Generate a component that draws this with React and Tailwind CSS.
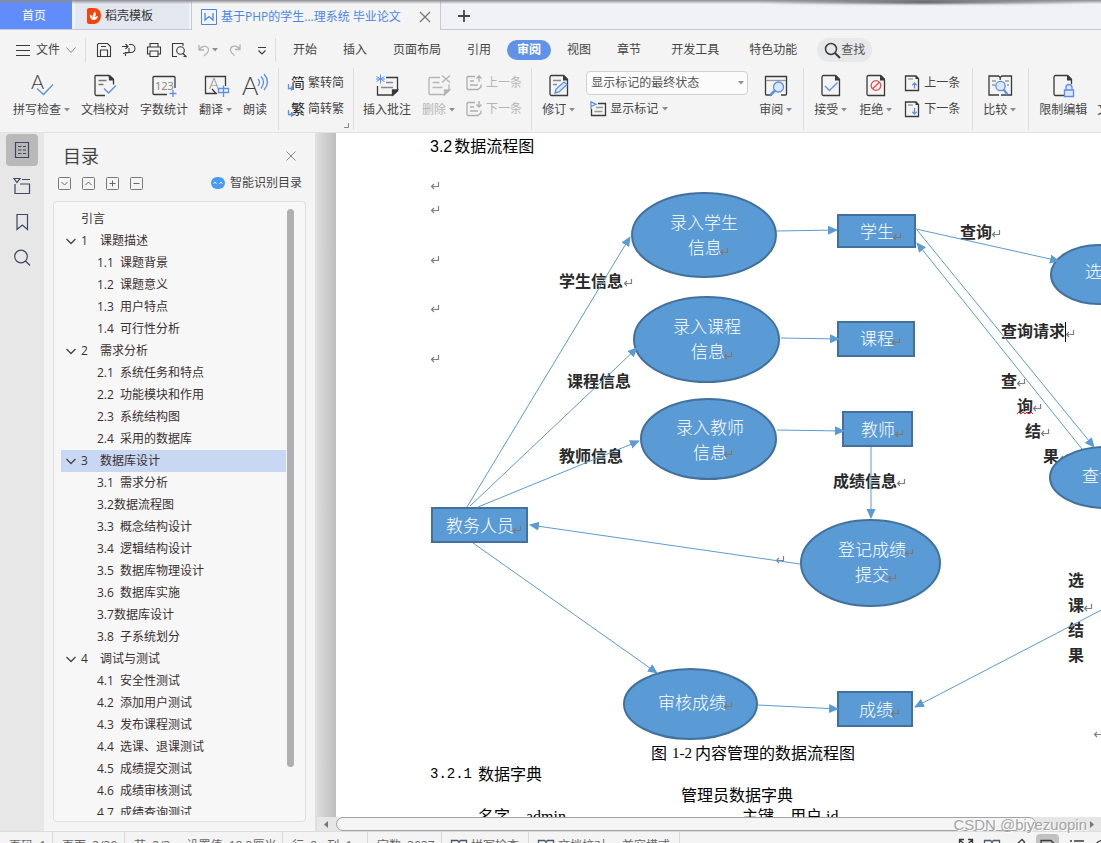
import React from 'react';

const OUTLINE = [
  { title: '引言' },
  { num: '1', title: '课题描述', parent: true },
  { num: '1.1  ', title: '课题背景' },
  { num: '1.2  ', title: '课题意义' },
  { num: '1.3  ', title: '用户特点' },
  { num: '1.4  ', title: '可行性分析' },
  { num: '2', title: '需求分析', parent: true },
  { num: '2.1  ', title: '系统任务和特点' },
  { num: '2.2  ', title: '功能模块和作用' },
  { num: '2.3  ', title: '系统结构图' },
  { num: '2.4  ', title: '采用的数据库' },
  { num: '3', title: '数据库设计', parent: true, selected: true },
  { num: '3.1  ', title: '需求分析' },
  { num: '3.2', title: '数据流程图' },
  { num: '3.3  ', title: '概念结构设计' },
  { num: '3.4  ', title: '逻辑结构设计' },
  { num: '3.5  ', title: '数据库物理设计' },
  { num: '3.6  ', title: '数据库实施' },
  { num: '3.7', title: '数据库设计' },
  { num: '3.8  ', title: '子系统划分' },
  { num: '4', title: '调试与测试', parent: true },
  { num: '4.1  ', title: '安全性测试' },
  { num: '4.2  ', title: '添加用户测试' },
  { num: '4.3  ', title: '发布课程测试' },
  { num: '4.4  ', title: '选课、退课测试' },
  { num: '4.5  ', title: '成绩提交测试' },
  { num: '4.6  ', title: '成绩审核测试' },
  { num: '4.7  ', title: '成绩查询测试' },
];

// ---------- small shared pieces ----------

const Icon = ({ size = 24, w, children, className = '' }) => (
  <svg
    width={w || size}
    height={size}
    viewBox={`0 0 ${w || size} ${size}`}
    fill="none"
    stroke="#3a3a3a"
    strokeWidth="1.3"
    className={`shrink-0 overflow-visible ${className}`}
    aria-hidden="true"
  >
    {children}
  </svg>
);

const Caret = () => (
  <svg width="6" height="4" viewBox="0 0 6 4" className="shrink-0" aria-hidden="true">
    <path d="M0 0h6L3 3.6z" fill="#8f8f8f" />
  </svg>
);

const BigButton = ({ icon, label, caret, disabled }) => (
  <button
    type="button"
    disabled={disabled}
    className={`flex shrink-0 flex-col items-center gap-[5px] whitespace-nowrap ${disabled ? 'text-[#b5b5b5]' : ''}`}
  >
    {icon}
    <span className="flex items-center gap-[3px] leading-4">
      {label}
      {caret && <Caret />}
    </span>
  </button>
);

const SmallButton = ({ icon, label, caret, disabled }) => (
  <button
    type="button"
    disabled={disabled}
    className={`flex shrink-0 items-center gap-1 whitespace-nowrap leading-4 ${disabled ? 'text-[#b5b5b5]' : ''}`}
  >
    {icon}
    {label}
    {caret && <Caret />}
  </button>
);

const Group = ({ children, className = '' }) => (
  <div className={`flex shrink-0 items-start border-r border-[#dedede] pt-[5px] ${className}`}>{children}</div>
);

// ---------- ribbon icons ----------

const BLUE = '#5b8fe8';

const PageOutline = ({ color = '#3a3a3a' }) => (
  <>
    <path d="M4.500 2.500h12l4 4v16h-16a1.500 1.500 0 0 1-1.500-1.500V4a1.500 1.500 0 0 1 1.500-1.500z" stroke={color} />
    <path d="M16 2.500h1.500L21 6v1.500h-5z" fill={color} stroke="none" />
  </>
);

const SpellIcon = () => (
  <Icon>
    <text x="1" y="16" fontSize="20" fill="#3a3a3a" stroke="none" fontFamily="Lato" fontWeight="300">A</text>
    <path d="M7 15.500l6.500 6L23 11.500" stroke={BLUE} />
  </Icon>
);

const ProofIcon = () => (
  <Icon>
    <path d="M12 22.500H3.500A1.500 1.500 0 0 1 2 21V3.500a1 1 0 0 1 1-1h13l4.500 4v5" />
    <path d="M15.500 2.500h2L21 6v1.500h-5z" fill="#3a3a3a" stroke="none" />
    <path d="M5.500 7.500h8M5.500 11.500h5" stroke="#777" />
    <path d="M11 15.500l4.500 4.500L23 12.500" stroke={BLUE} />
  </Icon>
);

const CountIcon = () => (
  <Icon>
    <path d="M15 21.500H2a1 1 0 0 1-1-1v-16a1 1 0 0 1 1-1h20a1 1 0 0 1 1 1V15" />
    <text x="3" y="16.500" fontSize="11" fill="#888" stroke="none" fontFamily="Noto Sans">123</text>
    <path d="M21 17v7M17.500 20.500h7" stroke={BLUE} />
  </Icon>
);

const TranslateIcon = () => (
  <Icon>
    <path d="M13 20.500H1.500v-17h20V13M8 16l4 4.500" />
    <text x="5" y="16" fontSize="15" fill="#888" stroke="none" fontFamily="Lato" fontWeight="300">A</text>
    <path d="M14.500 15.500h10v4h-10zM19.500 12.500V24" stroke={BLUE} />
  </Icon>
);

const ReadIcon = () => (
  <Icon>
    <text x="-1" y="22" fontSize="25" fill="#3a3a3a" stroke="none" fontFamily="Lato" fontWeight="300">A</text>
    <path d="M15 6q3 3 0 7M18 3.500q5 5.500 0 12M21 1q7 8 0 16" stroke={BLUE} />
  </Icon>
);

const ConvertIcon = ({ char }) => (
  <Icon size={18} w={16}>
    <text x="3" y="14" fontSize="14" fill="#222" stroke="none" fontFamily="Noto Sans CJK SC">{char}</text>
    <path d="M.500 10v4.500h4M3 12.500l2 2-2 2" stroke={BLUE} />
  </Icon>
);

const CommentIcon = () => (
  <Icon>
    <path d="M11 4.500h11.500V18l-4.500 4H2.500v-9" />
    <path d="M22.500 17l-5 5v-5z" fill="#3a3a3a" />
    <path d="M11 9.500h7M6 14.500h12" stroke="#888" />
    <path d="M5.500 1.500v9M1.500 3.500l8 5M9.500 3.500l-8 5M1 6h9" stroke={BLUE} strokeWidth="1" />
  </Icon>
);

const DeleteIcon = () => (
  <Icon>
    <g stroke="#b5b5b5">
      <path d="M13 4.500H3a1 1 0 0 0-1 1v15a1 1 0 0 0 1 1h14l5-4v-6" />
      <path d="M22.500 17l-5 5v-5z" fill="#b5b5b5" />
      <path d="M5.500 9.500h7M5.500 14.500h10M15 2.500l8 7M23 2.500l-8 7" />
    </g>
  </Icon>
);

const NoteIcon = ({ up }) => (
  <Icon size={16}>
    <g stroke="#aeaeae">
      <path d="M9 1.500H2a1 1 0 0 0-1 1v11a1 1 0 0 0 1 1h10l3-2.500V9.500M4 6h4M4 10h8" />
      <path d={up ? 'M13 7V1M10.500 3.500L13 1l2.500 2.500' : 'M13 0v6M10.500 3.500L13 6l2.500-2.500'} />
    </g>
  </Icon>
);

const ReviseIcon = () => (
  <Icon>
    <PageOutline />
    <path d="M6 7.500h8M6 11.500h4" stroke="#888" />
    <path d="M8 20l1-4 8-7 3 2.500-8 7.500z" stroke={BLUE} fill="#dbe7fb" />
  </Icon>
);

const MarkupIcon = () => (
  <Icon size={16}>
    <path d="M8 2.500h7.500v12h-14V8" />
    <path d="M6 6.500h7M4.500 10.500h8" stroke="#999" />
    <path d="M1 8V.700l5 2.600-5 2.200" stroke={BLUE} />
  </Icon>
);

const InspectIcon = () => (
  <Icon>
    <path d="M8 22H2.500a1 1 0 0 1-1-1V3.500h21V21a1 1 0 0 1-1 1H17" />
    <path d="M2 7.500h20" stroke="#999" />
    <circle cx="14.500" cy="14" r="5" stroke={BLUE} fill="#dbe7fb" />
    <path d="M11 17.500l-5 5" stroke={BLUE} strokeWidth="2.500" />
  </Icon>
);

const AcceptIcon = () => (
  <Icon>
    <PageOutline />
    <path d="M6 13l4.500 4.500L18.500 9.500" stroke={BLUE} />
  </Icon>
);

const RejectIcon = () => (
  <Icon>
    <PageOutline />
    <circle cx="12" cy="12.500" r="4.800" stroke="#d9534f" />
    <path d="M8.700 15.800l6.600-6.600" stroke="#d9534f" />
  </Icon>
);

const ChangeIcon = ({ up }) => (
  <Icon size={16}>
    <path d="M1.500 1h10.500l2.500 2.500V15.500h-13z" />
    <path d="M11.500.500l3.500 3.500h-3.500z" fill="#3a3a3a" stroke="none" />
    <path d="M4 4h5" stroke="#999" />
    <path d={up ? 'M10.500 13.500V8M8.300 10.200L10.500 8l2.200 2.200' : 'M10.500 7v6M8.300 10.800l2.200 2.200 2.200-2.200'} stroke={BLUE} />
  </Icon>
);

const CompareIcon = () => (
  <Icon>
    <path d="M11 22H1V3h9.500l1.700 1.500L14 3h9.500v19H13M12.200 4v3" />
    <path d="M4 8h4M4 12h3M17 8h4M19 12h2" stroke="#999" />
    <circle cx="12.500" cy="13" r="4.700" stroke={BLUE} fill="#dbe7fb" />
    <path d="M15.500 16.500l4 5" stroke={BLUE} strokeWidth="2.200" />
  </Icon>
);

const RestrictIcon = () => (
  <Icon>
    <path d="M13 22.500H4.500A1.500 1.500 0 0 1 3 21V4a1.500 1.500 0 0 1 1.500-1.500h12l4 4V11" />
    <path d="M16 2.500h1.500L21 6v1.500h-5z" fill="#3a3a3a" stroke="none" />
    <path d="M13.500 17h9v6.500h-9zM15 17v-2.500a3 3 0 0 1 6 0V17" stroke={BLUE} fill="#dbe7fb" />
  </Icon>
);

// ---------- top bars ----------

const TitleTabs = () => (
  <header className="relative flex h-[30px] shrink-0 items-stretch border-b border-[#c3c8da] bg-[#f1f2f8]">
    <div className="absolute inset-x-0 top-0 h-1 bg-linear-to-b from-[#8b8b91] to-transparent" />
    <div className="absolute right-3 top-0 h-1 w-[330px] bg-linear-to-r from-transparent via-[#66666b] to-transparent blur-[1px]" />
    <button type="button" className="w-[72px] bg-[#618dfb] pt-[3px] pr-1 text-white">首页</button>
    <button type="button" className="ml-[3px] flex w-[114px] items-center gap-1 bg-[#e3e7ef] pl-3 pt-[3px] text-[#333]">
      <svg width="14" height="16" viewBox="0 0 14 16" aria-hidden="true">
        <path d="M2 0h5c4 0 7 3 7 7.500S11 16 7 16H2a2 2 0 0 1-2-2V2a2 2 0 0 1 2-2z" fill="#f9420b" />
        <path d="M5.500 12C3.500 10.500 2.500 8.500 3 6.500c1.500.500 2.500 2 2.700 3.500C5.500 7 6.500 4.500 8 3.500c1.300 2 .800 5-.500 7 .800-1.500 2-2.500 3.500-2.500-.300 2.500-2.500 4.500-5.500 4z" fill="#fff" />
      </svg>
      稻壳模板
    </button>
    <div className="-mb-px ml-0.5 flex w-[250px] items-center border-x border-[#c3c8da] bg-[#f4f4f5] px-[9px] pt-[3px] text-[#4a86e8]">
      <svg width="16" height="16" viewBox="0 0 16 16" fill="none" stroke="#4a86e8" className="shrink-0" aria-hidden="true">
        <path d="M.500.500h15v15H.500z" />
        <path d="M4 4v7l4-3.500 4 3.500V4" strokeWidth="1.300" />
      </svg>
      <span className="ml-1 flex-1 whitespace-nowrap">基于PHP的学生...理系统 毕业论文</span>
      <button type="button" aria-label="关闭标签">
        <Icon size={12}><path d="M1 1l10 10M11 1L1 11" stroke="#777" /></Icon>
      </button>
    </div>
    <button type="button" aria-label="新建标签" className="px-4 pt-[3px]">
      <Icon size={14}><path d="M7 1v12M1 7h12" stroke="#444" strokeWidth="1.800" /></Icon>
    </button>
  </header>
);

const MenuTab = ({ children, active }) => (
  <button
    type="button"
    className={`h-5 shrink-0 whitespace-nowrap rounded-full px-2.5 ${active ? 'bg-[#5f92e8] font-bold text-white' : ''}`}
  >
    {children}
  </button>
);

const ToolButton = ({ label, children }) => (
  <button type="button" aria-label={label} className="shrink-0">
    <Icon size={16}>{children}</Icon>
  </button>
);

const MenuBar = () => (
  <nav className="flex h-[38px] shrink-0 items-center pt-0.5">
    <button type="button" className="flex items-center gap-[6px] pl-4 pr-[9px]">
      <Icon size={14}><path d="M0 2.500h14M0 7.500h14M0 12.500h14" strokeWidth="1" /></Icon>
      文件
      <Icon size={10}><path d="M.500 2.500L5 7.500l4.500-5" stroke="#888" strokeWidth="1" /></Icon>
    </button>
    <div className="flex h-6 w-[191px] items-center gap-[9px] border-x border-[#dcdcdc] pl-[10px]">
      <ToolButton label="保存">
        <path d="M2.500 1.500h9l3 3v10H1.500v-12zM4.500 14.500V8h7v6.500M5 4.500h5" strokeWidth="1.100" />
      </ToolButton>
      <ToolButton label="输出为PDF">
        <path d="M1 4.500h5M4.500 2L7 4.500 4.500 7M4.500 14v-3.500H10a4 4 0 0 0 0-8H8M8 6v4.500l-6 1" strokeWidth="1.100" />
      </ToolButton>
      <ToolButton label="打印">
        <path d="M4 5V1.500h8V5M4 12H1.500V5h13v7H12M4 9h8v5.500H4z" strokeWidth="1.100" />
      </ToolButton>
      <ToolButton label="打印预览">
        <path d="M6 14.500H1.500v-13H12V4M14.500 14.500h-2" strokeWidth="1.100" />
        <circle cx="9.500" cy="8.500" r="3.800" strokeWidth="1.100" />
        <path d="M12 11.500l3.500 3.500" />
      </ToolButton>
      <div className="flex items-center">
        <ToolButton label="撤销">
          <path d="M3 3v5h5M3.500 7.500C6 3 13 3.500 12.500 8.500c-.300 2-2 3.500-4.500 5.500" stroke="#b3b3b3" />
        </ToolButton>
        <Caret />
      </div>
      <ToolButton label="恢复">
        <path d="M13 2.500v5H8M12.500 7C10 2.500 3 3.500 3.500 8.500c.300 2 2 3.500 4 5" stroke="#b3b3b3" />
      </ToolButton>
      <ToolButton label="自定义快速访问工具栏">
        <path d="M6 5.500h8M6.500 8.500l3.500 3.500 3.500-3.500" strokeWidth="1.100" />
      </ToolButton>
    </div>
    <div className="flex items-center gap-[10px] pl-[7px]">
      <div className="flex items-center gap-1.5">
        <MenuTab>开始</MenuTab>
        <MenuTab>插入</MenuTab>
        <MenuTab>页面布局</MenuTab>
        <MenuTab>引用</MenuTab>
        <MenuTab active>审阅</MenuTab>
        <MenuTab>视图</MenuTab>
        <MenuTab>章节</MenuTab>
      </div>
      <MenuTab>开发工具</MenuTab>
      <MenuTab>特色功能</MenuTab>
      <button type="button" className="flex h-6 items-center rounded-full bg-[#e6e8ea] px-[7px] text-[#555]">
        <Icon size={17}>
          <circle cx="7" cy="7" r="5.500" strokeWidth="1.500" />
          <path d="M11 11l5 5" strokeWidth="2" />
        </Icon>
        查找
      </button>
    </div>
  </nav>
);

const Ribbon = () => (
  <div className="flex h-[65px] shrink-0 items-stretch overflow-hidden border-b border-[#e2e2e2] pb-0.5">
    <Group className="gap-[11px] pl-[13px] pr-[11px]">
      <BigButton icon={<SpellIcon />} label="拼写检查" caret />
      <BigButton icon={<ProofIcon />} label="文档校对" />
      <BigButton icon={<CountIcon />} label="字数统计" />
      <BigButton icon={<TranslateIcon />} label="翻译" caret />
      <BigButton icon={<ReadIcon />} label="朗读" />
    </Group>
    <Group className="relative w-[75px] pl-[9px]">
      <div className="flex flex-col gap-2 pt-px">
        <SmallButton icon={<ConvertIcon char="简" />} label="繁转简" />
        <SmallButton icon={<ConvertIcon char="繁" />} label="简转繁" />
      </div>
      <Icon size={5} className="absolute bottom-0.5 right-1"><path d="M4.500 0v4.500H0" stroke="#888" strokeWidth="1" /></Icon>
    </Group>
    <Group className="gap-[11px] pl-[9px] pr-[9px]">
      <BigButton icon={<CommentIcon />} label="插入批注" />
      <BigButton icon={<DeleteIcon />} label="删除" caret disabled />
      <div className="flex flex-col gap-[10px] pt-0.5">
        <SmallButton icon={<NoteIcon up />} label="上一条" disabled />
        <SmallButton icon={<NoteIcon />} label="下一条" disabled />
      </div>
    </Group>
    <Group className="gap-[11px] pl-[10px] pr-[11px]">
      <BigButton icon={<ReviseIcon />} label="修订" caret />
      <div className="-mt-0.5 flex flex-col gap-[6px]">
        <div className="relative flex items-center">
          <select
            aria-label="显示标记的状态"
            className="h-6 w-[162px] appearance-none rounded border border-[#d0d0d0] bg-[#fbfbfb] pl-1 text-[#555]"
          >
            <option>显示标记的最终状态</option>
          </select>
          <span className="pointer-events-none absolute right-1"><Caret /></span>
        </div>
        <div className="pl-1"><SmallButton icon={<MarkupIcon />} label="显示标记" caret /></div>
      </div>
      <BigButton icon={<InspectIcon />} label="审阅" caret />
    </Group>
    <Group className="gap-3 pl-[10px] pr-3">
      <BigButton icon={<AcceptIcon />} label="接受" caret />
      <BigButton icon={<RejectIcon />} label="拒绝" caret />
      <div className="flex flex-col gap-[10px] pt-0.5">
        <SmallButton icon={<ChangeIcon up />} label="上一条" />
        <SmallButton icon={<ChangeIcon />} label="下一条" />
      </div>
    </Group>
    <Group className="pl-[10px] pr-3">
      <BigButton icon={<CompareIcon />} label="比较" caret />
    </Group>
    <div className="flex items-start gap-[10px] pl-[10px] pt-[5px]">
      <BigButton icon={<RestrictIcon />} label="限制编辑" />
      <BigButton icon={<Icon w={4} />} label="文档权限" />
    </div>
  </div>
);

// ---------- left side ----------

const SideButton = ({ label, active, children }) => (
  <button
    type="button"
    aria-label={label}
    className={`flex size-8 items-center justify-center rounded ${active ? 'bg-[#b9b9b9]' : ''}`}
  >
    <svg width="18" height="18" viewBox="0 0 18 18" fill="none" stroke="#3b4763" strokeWidth="1.200" aria-hidden="true">
      {children}
    </svg>
  </button>
);

const SideBar = () => (
  <aside className="flex w-11 shrink-0 flex-col items-center gap-1 bg-[#e7e7e7] pt-px">
    <SideButton label="目录" active>
      <path d="M2.500 1.500h13v15h-13zM5 5.500h3.500M10 5.500h3M5 9h3.500M10 9h3M5 12.500h3.500M10 12.500h3" />
    </SideButton>
    <SideButton label="章节">
      <path d="M1 1.500h6L4 5.500zM9 2.500h8M2 7v9.500h14.500v-9.500H7" />
    </SideButton>
    <SideButton label="书签">
      <path d="M4 1.500h10.500v15l-5.200-4.500L4 16.500z" />
    </SideButton>
    <SideButton label="查找">
      <circle cx="8" cy="7.500" r="6.300" />
      <path d="M12.500 12l4.500 4.500" />
    </SideButton>
  </aside>
);

const LevelButton = ({ label, d }) => (
  <button type="button" aria-label={label}>
    <Icon size={13}>
      <rect x=".5" y=".5" width="12" height="12" rx="1" stroke="#777" strokeWidth="1" />
      <path d={d} stroke="#666" strokeWidth="1" />
    </Icon>
  </button>
);

const OutlineRow = ({ num, title, parent, selected }) => (
  <li
    className={`flex h-[22px] items-center whitespace-pre ${selected ? 'bg-[#c8d7f2]' : ''} ${
      parent ? 'gap-[5px] pl-[5px]' : num ? 'pl-9' : 'pl-5'
    }`}
  >
    {parent && <Icon size={10}><path d="M.500 3L5 7.500 9.500 3" stroke="#444" /></Icon>}
    {num && <span className={parent ? 'w-[14px]' : ''}>{num}</span>}
    {title}
  </li>
);

const OutlinePanel = () => (
  <section className="flex w-[271px] shrink-0 flex-col bg-[#f4f4f4] px-[9px] pb-[9px] pt-[9px]">
    <div className="flex h-7 items-center justify-between pl-[10px] pr-2.5">
      <h2 className="text-lg text-[#444]">目录</h2>
      <button type="button" aria-label="关闭">
        <Icon size={10}><path d="M.500.500l9 9M9.500.500l-9 9" stroke="#888" strokeWidth="1" /></Icon>
      </button>
    </div>
    <div className="mt-[5px] flex h-4 items-center justify-between pl-[5px] pr-1">
      <div className="flex gap-[11px]">
        <LevelButton label="展开" d="M3.500 5l3 3 3-3" />
        <LevelButton label="收起" d="M3.500 8l3-3 3 3" />
        <LevelButton label="增加级别" d="M3.500 6.500h6M6.500 3.500v6" />
        <LevelButton label="减少级别" d="M3.500 6.500h6" />
      </div>
      <button type="button" className="flex items-center gap-[5px] text-[#444]">
        <svg width="14" height="12" viewBox="0 0 14 12" aria-hidden="true">
          <rect width="14" height="12" rx="6" fill="#4b9bf5" />
          <path d="M2.500 6.500q1.500-2.500 3 0M8.500 6.500q1.500-2.500 3 0" stroke="#fff" fill="none" />
        </svg>
        智能识别目录
      </button>
    </div>
    <div className="mt-[10px] flex min-h-0 flex-1 rounded border border-[#dfdfdf] bg-[#f7f7f7] py-[6px] pl-[7px] pr-[11px]">
      <ul className="min-w-0 flex-1 overflow-hidden text-[#3a3030]">
        {OUTLINE.map((row) => (
          <OutlineRow key={(row.num || '') + row.title} {...row} />
        ))}
      </ul>
      <div className="ml-px mt-px h-[92%] w-[7px] rounded-full bg-[#b0b0b2]" />
    </div>
  </section>
);

// ---------- document ----------

const NODES = [
  { shape: 'ellipse', x: 296, y: 33, w: 144, h: 84, lines: [[334, 63, '录入学生'], [352, 88, '信息']] },
  { shape: 'ellipse', x: 298, y: 137, w: 145, h: 85, lines: [[337, 167, '录入课程'], [355, 192, '信息']] },
  { shape: 'ellipse', x: 305, y: 239, w: 135, h: 80, lines: [[340, 268, '录入教师'], [357, 293, '信息']] },
  { shape: 'ellipse', x: 465, y: 360, w: 139, h: 86, lines: [[502, 390, '登记成绩'], [519, 415, '提交']] },
  { shape: 'ellipse', x: 288, y: 509, w: 133, h: 70, lines: [[322, 543, '审核成绩']] },
  { shape: 'ellipse', x: 715, y: 85, w: 96, h: 59, lines: [[749, 112, '选课']] },
  { shape: 'ellipse', x: 714, y: 287, w: 112, h: 61, lines: [[746, 316, '查询']] },
  { shape: 'rect', x: 502, y: 55, w: 77, h: 32, lines: [[524, 72, '学生']] },
  { shape: 'rect', x: 502, y: 162, w: 76, h: 34, lines: [[524, 179, '课程']] },
  { shape: 'rect', x: 507, y: 252, w: 69, h: 34, lines: [[525, 270, '教师']] },
  { shape: 'rect', x: 96, y: 348, w: 95, h: 34, lines: [[110, 366, '教务人员']] },
  { shape: 'rect', x: 502, y: 532, w: 74, h: 34, lines: [[523, 550, '成绩']] },
];

const ARROWS = [
  [131, 347, 294, 77],
  [134, 346, 301, 188],
  [142, 347, 303, 281],
  [440, 71, 501, 70],
  [445, 178, 503, 179],
  [441, 270, 508, 271],
  [535, 287, 535, 358],
  [464, 404, 194, 365],
  [137, 383, 321, 513],
  [422, 545, 502, 549],
  [580, 69, 723, 101],
  [581, 70, 758, 287],
  [746, 289, 581, 83],
  [800, 432, 579, 547],
];

const LABELS = [
  [223, 121, '学生信息'],
  [231, 221, '课程信息'],
  [223, 296, '教师信息'],
  [624, 72, '查询'],
  [665, 171, '查询请求'],
  [665, 221, '查'],
  [681, 246, '询'],
  [689, 271, '结'],
  [707, 296, '果'],
  [497, 321, '成绩信息'],
  [732, 420, '选'],
  [732, 445, '课'],
  [732, 470, '结'],
  [732, 495, '果'],
];

const MARKS = [
  [95, 25], [95, 49], [95, 99], [95, 148], [95, 198],
  [288, 122], [656, 73], [730, 173], [681, 222], [697, 247], [705, 272], [724, 297],
  [561, 322], [748, 447], [440, 399], [758, 573],
];

const NODE_MARKS = [
  [384, 91], [388, 195], [388, 293], [557, 76], [556, 181], [559, 273],
  [177, 369], [569, 392], [552, 417], [388, 545], [555, 552],
];

const ReturnMark = ({ x, y, color = '#808080' }) => (
  <path d={`M${x + 7}.5 ${y - 3}v4.500h-7m2.500-2.500l-2.500 2.500l2.500 2.500`} fill="none" stroke={color} strokeWidth="1.200" />
);

const Node = ({ shape, x, y, w, h, lines }) => (
  <g>
    {shape === 'rect' ? (
      <rect x={x} y={y} width={w} height={h} fill="#5b9bd5" stroke="#41719c" strokeWidth="2" />
    ) : (
      <ellipse cx={x + w / 2} cy={y + h / 2} rx={w / 2} ry={h / 2} fill="#5b9bd5" stroke="#41719c" strokeWidth="2" />
    )}
    {lines.map(([tx, ty, text]) => (
      <text key={text} x={tx} y={ty + 6} fill="#fff" className="text-[17px] font-light">{text}</text>
    ))}
  </g>
);

const FlowChart = () => (
  <svg className="block h-[583px] w-full" role="img" aria-label="数据流程图">
    <defs>
      <marker id="arrow" markerUnits="userSpaceOnUse" markerWidth="10" markerHeight="10" refX="9" refY="5" orient="auto">
        <path d="M0 .500L10 5 0 9.500z" fill="#5b9bd5" />
      </marker>
    </defs>
    {LABELS.map(([x, y, text]) => (
      <text key={`${x}-${y}`} x={x} y={y + 6} fill="#2a2a2a" className="text-base font-bold">{text}</text>
    ))}
    <path d="M681 254l2-2 2 2 2-2 2 2 2-2 2 2 2-2 2 2" fill="none" stroke="#e02020" />
    {MARKS.map(([x, y]) => <ReturnMark key={`${x}-${y}`} x={x} y={y} />)}
    <path d="M729.500 162v20" stroke="#000" />
    {NODES.map((node) => <Node key={`${node.x}-${node.y}`} {...node} />)}
    {ARROWS.map(([x1, y1, x2, y2]) => (
      <line key={`${x1}-${y1}`} x1={x1} y1={y1} x2={x2} y2={y2} stroke="#5b9bd5" markerEnd="url(#arrow)" />
    ))}
    {NODE_MARKS.map(([x, y]) => <ReturnMark key={`${x}-${y}`} x={x} y={y} color="#80786f" />)}
  </svg>
);

const Document = () => (
  <article className="min-h-0 flex-1 overflow-hidden bg-white text-base text-black">
    <h1 className="flex h-[27px] gap-0.5 pl-[94px] leading-[27px]">
      <span className="font-['Liberation_Sans']">3.2</span>数据流程图
    </h1>
    <FlowChart />
    <div className="pl-[94px] pr-[25px] leading-[21px]">
      <p className="flex justify-center gap-[3px]">
        图 <span className="pl-0.5 font-['Liberation_Serif'] text-[15px]">1-2</span>内容管理的数据流程图
      </p>
      <h2 className="flex">
        <span className="w-12 font-['Liberation_Mono'] text-sm leading-[21px]">3.2.1</span>数据字典
      </h2>
      <p className="pr-8 text-center">管理员数据字典</p>
      <div className="flex pl-12 font-['Liberation_Serif','Noto_Sans_CJK_SC',serif]">
        <p className="flex w-[264px] gap-4"><span>名字</span><span>admin</span></p>
        <p className="flex gap-4"><span>主键</span><span>用户 id</span></p>
      </div>
    </div>
  </article>
);

const HorizontalScroll = () => (
  <div className="relative flex h-[14px] shrink-0 items-center gap-2 bg-[#e6e6e6] pl-[7px] pr-[7px]">
    <svg width="4" height="7" viewBox="0 0 4 7" aria-hidden="true"><path d="M4 0v7L0 3.500z" fill="#777" /></svg>
    <div className="h-[14px] min-w-0 flex-1 pr-[46px]">
      <div className="h-full rounded-full border border-[#a3a3a3] bg-[#f5f5f5]" />
    </div>
    <svg width="4" height="7" viewBox="0 0 4 7" aria-hidden="true"><path d="M0 0v7l4-3.500z" fill="#777" /></svg>
    <span className="absolute right-[14px] pt-0.5 font-['Liberation_Sans'] text-[15px] text-[#a4a4a4] [text-shadow:1px_1px_0_#fff]">
      CSDN @biyezuopin
    </span>
  </div>
);

// ---------- status bar ----------

const StatusCell = ({ children, className = '' }) => (
  <div className={`flex items-center whitespace-pre border-r border-[#d8d8d8] px-[9px] ${className}`}>{children}</div>
);

const BookIcon = () => (
  <Icon size={16}><path d="M8 4L6.500 2.500H.500v11h6L8 15l1.500-1.500h6v-11h-6zM8 4v10" stroke="#4a5568" /></Icon>
);

const StatusBar = () => (
  <footer className="h-3 shrink-0 overflow-hidden border-t border-[#dcdcdc] bg-[#f4f4f4] text-[#666]">
    <div className="flex h-7 justify-between">
      <div className="flex">
        <StatusCell className="w-[53px]">页码: 1</StatusCell>
        <StatusCell className="w-[72px]">页面: 2/39</StatusCell>
        <StatusCell className="w-[158px] gap-4"><span>节: 2/3</span><span>设置值: 18.3厘米</span></StatusCell>
        <StatusCell className="w-[85px] gap-2.5"><span>行: 8</span><span>列: 1</span></StatusCell>
        <StatusCell className="w-[74px]">字数: 3037</StatusCell>
        <StatusCell className="gap-1"><BookIcon />拼写检查</StatusCell>
        <StatusCell className="gap-1"><BookIcon />文档校对<span className="pl-3">兼容模式</span></StatusCell>
      </div>
      <div className="flex items-center gap-[10px]">
        <Icon size={16}><path d="M9.500 6.500L14 2M10 1.500h4.500V6M6.500 6.500L2 2M6 1.500H1.500V6M6.500 9.500L2 14M9.500 9.500L14 14" /></Icon>
        <BookIcon />
        <Icon size={16}><path d="M2 14l2-5 8-7.500 2.500 2.500-8 8z" /></Icon>
        <div className="flex h-6 w-[23px] items-center justify-center rounded bg-[#c2c2c2]">
          <Icon size={16}><path d="M1 2.500h10l4 4v7H1z" /></Icon>
        </div>
        <Icon size={16}><path d="M1 3h2M5 3h10M1 8h2M5 8h10M1 13h2M5 13h10" /></Icon>
        <Icon size={6} className="h-4"><circle cx="7" cy="4" r="6.500" /></Icon>
      </div>
    </div>
  </footer>
);

const App = () => {
  return (
    <div className="flex h-screen flex-col overflow-hidden bg-[#f4f4f4] font-['Open_Sans','Noto_Sans_CJK_SC',sans-serif] text-xs text-[#444]">
      <TitleTabs />
      <MenuBar />
      <Ribbon />
      <main className="flex min-h-0 flex-1">
        <SideBar />
        <OutlinePanel />
        <div className="flex min-w-0 flex-1 flex-col border-l-2 border-[#e0e0e0]">
          <div className="flex min-h-0 flex-1">
            <div className="w-[19px] shrink-0 bg-linear-to-r from-[#dcdcdc] to-[#bfbfbf]" />
            <Document />
          </div>
          <HorizontalScroll />
        </div>
      </main>
      <StatusBar />
    </div>
  );
};

export default App;
